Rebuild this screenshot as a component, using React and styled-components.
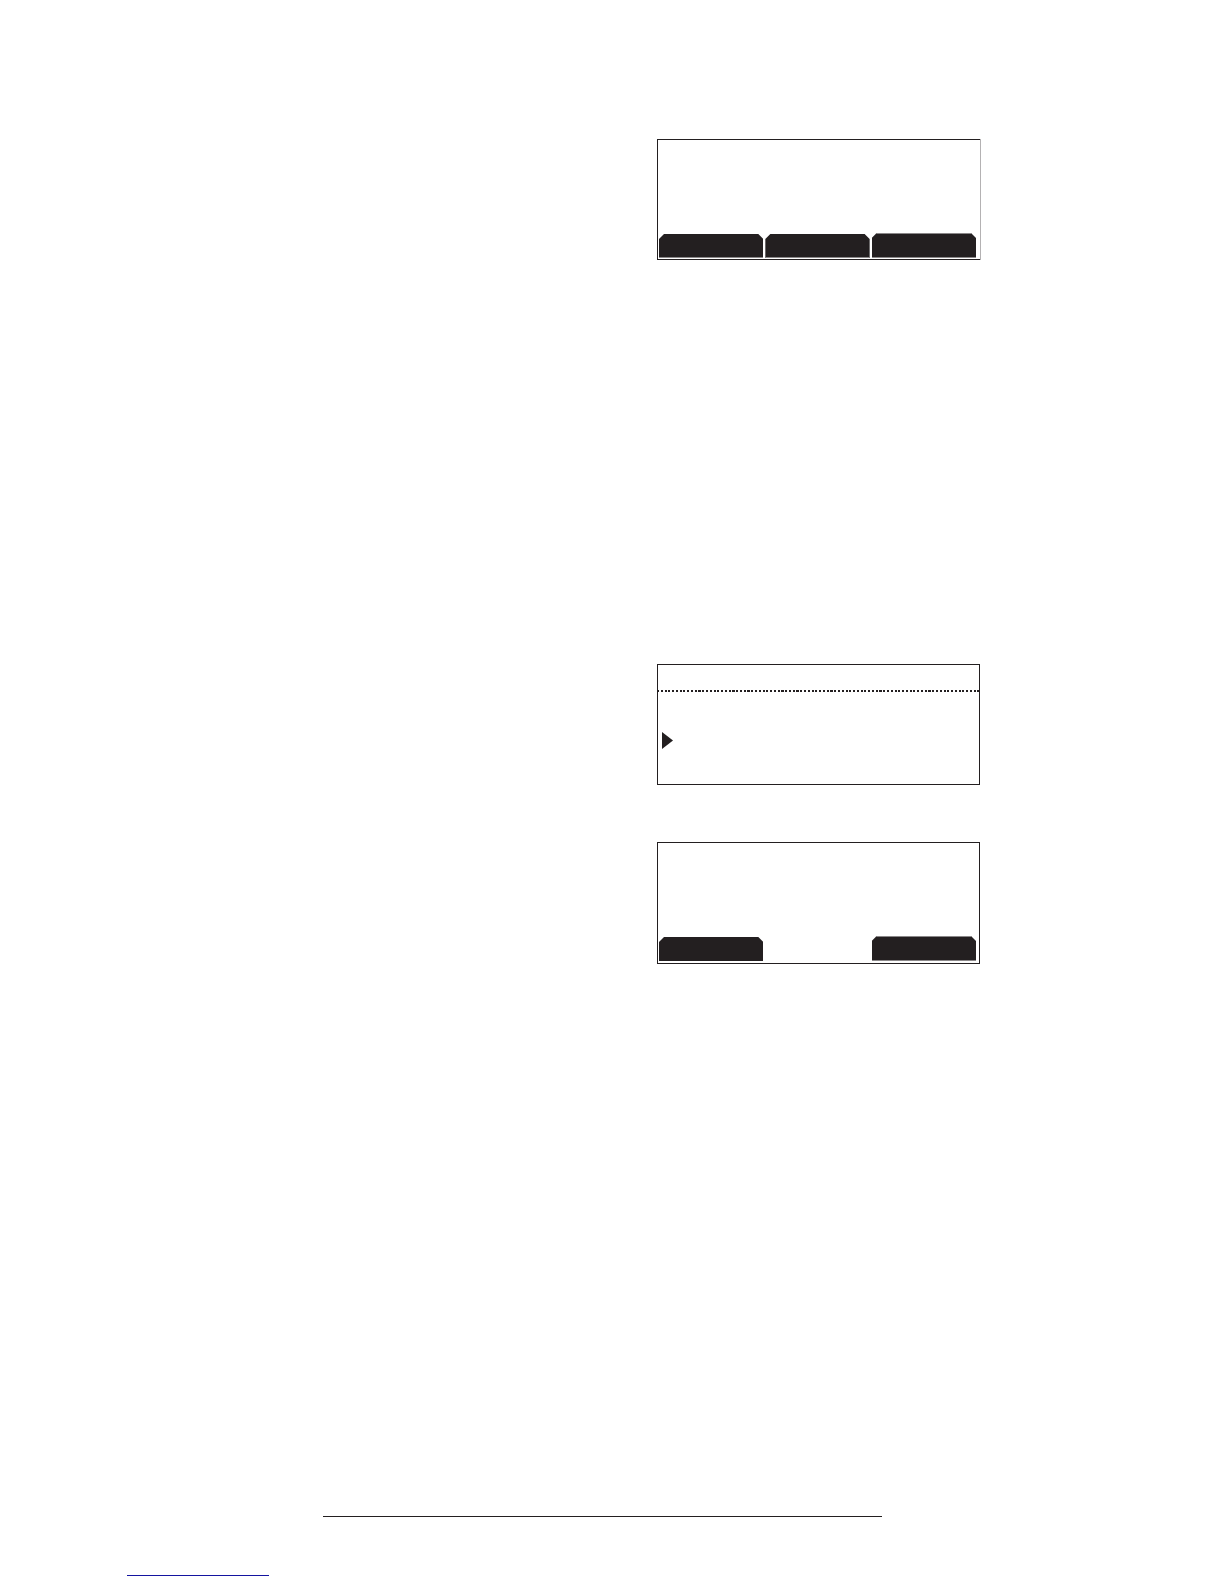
import React from 'react';
import styled, { createGlobalStyle } from 'styled-components';

const INK = '#231f20';
const EDGE = '#b4b2b3';
const KEY_EDGE = '#8a8788';
const LINK = '#1414a0';

const GlobalStyle = createGlobalStyle`
  body {
    margin: 0;
    background: #fff;
    color: ${INK};
    font-family: 'Liberation Sans', Arial, sans-serif;
  }
`;

const Page = styled.div`
  display: flex;
  flex-direction: column;
`;

const Main = styled.main`
  display: grid;
  grid-template-columns: 657fr 323fr 244fr;
  padding-top: 139px;
`;

const Screens = styled.div`
  grid-column: 2;
  display: flex;
  flex-direction: column;
`;

const Screen = styled.section`
  box-sizing: border-box;
  display: flex;
  flex-direction: column;
  min-height: ${props => props.$height}px;
  margin-bottom: ${props => props.$after}px;
  border: 1px solid ${INK};
  ${props => props.$softEdge && `
    border-right: 0;
    box-shadow: 1px 0 0 ${EDGE};
  `}
`;

const SoftKeys = styled.div`
  display: grid;
  grid-template-columns: repeat(3, 1fr);
  align-items: end;
  gap: 2px;
  margin-top: auto;
  padding: 0 ${props => (props.$wide ? 4 : 3)}px ${props => props.$lift}px 1px;
`;

const SoftKey = styled.button`
  grid-column: ${props => props.$slot};
  height: ${props => (props.$slot === 3 ? 25 : 24)}px;
  padding: 0;
  border: 0;
  border-top: ${props => (props.$slot === 3 ? `1px solid ${KEY_EDGE}` : 0)};
  border-bottom: 1px solid ${props => (props.$edged ? KEY_EDGE : INK)};
  background: ${INK};
  clip-path: polygon(0 5px, 5px 0, calc(100% - 5px) 0, 100% 5px, 100% 100%, 0 100%);
`;

const TitleRow = styled.header`
  height: 25px;
`;

const DottedRule = styled.svg`
  display: block;
  width: 100%;
  height: 2px;
`;

const MenuRow = styled.div`
  display: flex;
  padding: 40px 4px 0;
`;

const Footer = styled.footer`
  display: flex;
  flex-direction: column;
  gap: 58px;
`;

const FooterRow = styled.div`
  display: grid;
  grid-template-columns: ${props => props.$columns};
`;

const Rule = styled.hr`
  grid-column: 2;
  width: 100%;
  margin: 0;
  border: 0;
  border-top: 1px solid ${INK};
`;

const FooterLink = styled.a`
  grid-column: 2;
  border-bottom: 1px solid ${LINK};
`;

const App = () => (
  <Page>
    <GlobalStyle />
    <Main>
      <Screens>
        <Screen $height={121} $after={404} $softEdge>
          <SoftKeys $wide $lift={1}>
            <SoftKey type="button" aria-label="Left soft key" $slot={1} $edged />
            <SoftKey type="button" aria-label="Middle soft key" $slot={2} $edged />
            <SoftKey type="button" aria-label="Right soft key" $slot={3} $edged />
          </SoftKeys>
        </Screen>

        <Screen $height={121} $after={57}>
          <TitleRow />
          <DottedRule aria-hidden="true">
            <line
              x1="0"
              y1="1"
              x2="100%"
              y2="1"
              stroke={INK}
              strokeWidth="2"
              strokeDasharray="2.1 1.67"
              strokeDashoffset="1"
              shapeRendering="crispEdges"
            />
          </DottedRule>
          <MenuRow>
            <svg width="11" height="17" viewBox="0 0 11 17" aria-hidden="true">
              <path d="M0 0 L11 8.5 L0 17 Z" fill={INK} />
            </svg>
          </MenuRow>
        </Screen>

        <Screen $height={122} $after={552}>
          <SoftKeys $lift={2}>
            <SoftKey type="button" aria-label="Left soft key" $slot={1} />
            <SoftKey type="button" aria-label="Right soft key" $slot={3} $edged />
          </SoftKeys>
        </Screen>
      </Screens>
    </Main>

    <Footer>
      <FooterRow $columns="323fr 559fr 342fr">
        <Rule />
      </FooterRow>
      <FooterRow $columns="127fr 142fr 955fr">
        <FooterLink href="#top" aria-label="Back to top" />
      </FooterRow>
    </Footer>
  </Page>
);

export default App;
